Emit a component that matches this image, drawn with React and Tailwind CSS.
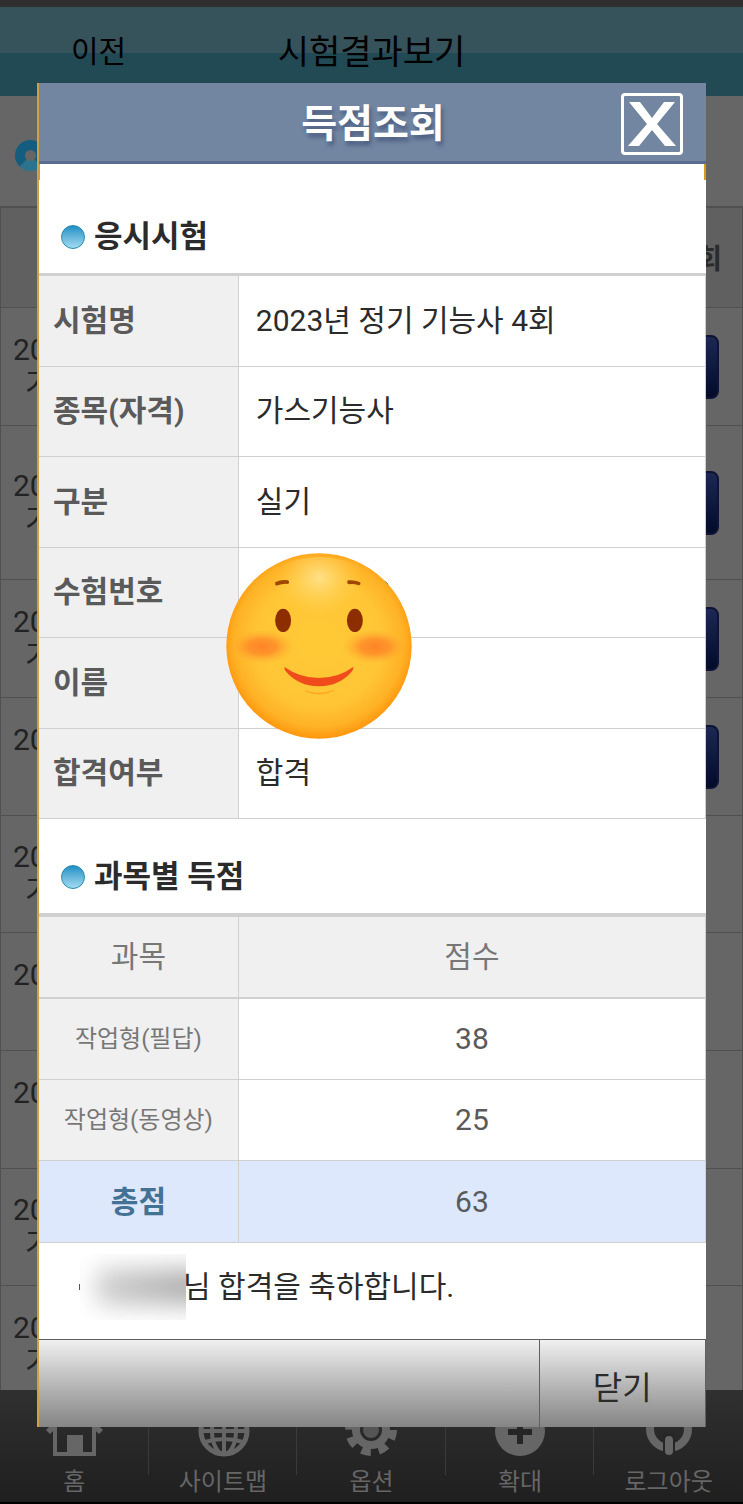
import { useState } from 'react';

const examInfo = [
  { label: '시험명', value: '2023년 정기 기능사 4회' },
  { label: '종목(자격)', value: '가스기능사' },
  { label: '구분', value: '실기' },
  { label: '수험번호', value: '00000000' },
  { label: '이름', value: '' },
  { label: '합격여부', value: '합격' },
];

const scores = [
  { subject: '작업형(필답)', score: 38 },
  { subject: '작업형(동영상)', score: 25 },
];

// Exam list behind the popup
const examRows = [
  { height: 'h-[118px]', second: '기', button: true },
  { height: 'h-[154px]', second: '기', button: true },
  { height: 'h-[118px]', second: '기', button: true },
  { height: 'h-[118px]', second: '', button: true },
  { height: 'h-[117px]', second: '기', button: false },
  { height: 'h-[118px]', second: '', button: false },
  { height: 'h-[118px]', second: '', button: false },
  { height: 'h-[117px]', second: '기', button: false },
  { height: 'h-[118px]', second: '기', button: false },
];

const HomeIcon = () => (
  <svg viewBox="0 0 60 60" className="size-[60px]" fill="currentColor" aria-hidden="true">
    <path d="M30 4 2 31l4 4 3-3v25h43V32l3 3 4-4zM13 28 30 12l18 16v25h-9V36H23v17H13z" fillRule="evenodd" />
    <path d="M23 36h16v18H23z" />
  </svg>
);

const GlobeIcon = () => (
  <svg viewBox="0 0 60 60" className="size-[60px]" fill="none" stroke="currentColor" strokeWidth="4" aria-hidden="true">
    <circle cx="31" cy="32" r="23" strokeWidth="5" />
    <ellipse cx="31" cy="32" rx="12" ry="23" />
    <path d="M31 9v46M8 32h46M12 19q19 6 38 0M12 43q19-6 38 0" />
  </svg>
);

const GearIcon = () => (
  <svg viewBox="0 0 60 60" className="size-[60px]" fill="none" stroke="currentColor" aria-hidden="true">
    <circle cx="30" cy="31" r="15" strokeWidth="8" />
    <circle cx="30" cy="31" r="22" strokeWidth="8" strokeDasharray="9.3 7.98" />
    <circle cx="30" cy="31" r="8" fill="#555555" stroke="none" />
  </svg>
);

const PlusIcon = () => (
  <svg viewBox="0 0 60 60" className="size-[60px]" aria-hidden="true">
    <circle cx="30" cy="32" r="25" fill="currentColor" />
    <path d="M18 33h24M30 21v24" stroke="#262626" strokeWidth="6" />
  </svg>
);

const LogoutIcon = () => (
  <svg viewBox="0 0 60 60" className="size-[60px]" fill="none" stroke="currentColor" aria-hidden="true">
    <circle cx="30" cy="30" r="19" strokeWidth="8" />
    <path d="M30 34v24" stroke="#262626" strokeWidth="12" />
    <path d="M30 41v11" strokeWidth="8" strokeLinecap="round" />
  </svg>
);

const navItems = [
  { label: '홈', Icon: HomeIcon },
  { label: '사이트맵', Icon: GlobeIcon },
  { label: '옵션', Icon: GearIcon },
  { label: '확대', Icon: PlusIcon },
  { label: '로그아웃', Icon: LogoutIcon },
];

const SmileFace = () => (
  <svg viewBox="0 0 560 560" className="size-full" aria-hidden="true">
    <defs>
      <radialGradient id="face" cx="0.5" cy="0.48" r="0.53">
        <stop offset="0" stopColor="#ffc935" />
        <stop offset="0.65" stopColor="#ffc535" />
        <stop offset="0.86" stopColor="#ffb226" />
        <stop offset="1" stopColor="#ff920a" />
      </radialGradient>
      <radialGradient id="shine">
        <stop offset="0" stopColor="#ffe491" stopOpacity="0.9" />
        <stop offset="1" stopColor="#ffd050" stopOpacity="0" />
      </radialGradient>
      <radialGradient id="cheek">
        <stop offset="0" stopColor="#ff8328" />
        <stop offset="0.45" stopColor="#ff8a28" stopOpacity="0.8" />
        <stop offset="1" stopColor="#ffae30" stopOpacity="0" />
      </radialGradient>
      <clipPath id="face-clip">
        <circle cx="280" cy="280" r="268" />
      </clipPath>
    </defs>
    <circle cx="280" cy="280" r="279" fill="url(#face)" />
    <g clipPath="url(#face-clip)">
      <ellipse cx="280" cy="75" rx="130" ry="120" fill="url(#shine)" />
      <ellipse cx="108" cy="282" rx="98" ry="52" fill="url(#cheek)" />
      <ellipse cx="448" cy="282" rx="98" ry="52" fill="url(#cheek)" />
    </g>
    <ellipse cx="172" cy="203" rx="24" ry="35" fill="#8c2e00" />
    <ellipse cx="388" cy="203" rx="24" ry="35" fill="#8c2e00" />
    <path d="M148 88q18-9 38-6 4 1 4 6t-5 5q-17-1-31 5-5 1-6-3z" fill="#a04800" />
    <path d="M365 87v-1q1-4 5-4 18-1 32 5 4 2 3 6t-6 4q-14-5-29-3-5 0-5-7z" fill="#a04800" />
    <path d="M176 343q46 33 104 33t103-33q2 4-3 12-38 46-100 46t-101-46q-4-7-3-12z" fill="#f04b1b" />
    <path d="M238 415q42 15 86-1-42 21-86 1z" fill="#ffa31f" stroke="#ffa31f" strokeWidth="2" />
  </svg>
);

const SectionTitle = ({ children }) => (
  <h2 className="flex items-center gap-[9px] pl-[22px] text-[31px] leading-10 font-bold text-[#2b2b2b]">
    <span className="size-6 rounded-full border border-[#2787ae] bg-linear-to-b from-[#1590c4] to-[#a0dcf2]"></span>
    {children}
  </h2>
);

const App = () => {
  const [open, setOpen] = useState(true);

  return (
    <div className="relative flex min-h-screen flex-col bg-[#666666] font-[Roboto,'Noto_Sans_CJK_KR',sans-serif] text-[30px] leading-[34px]">
      <div className="h-[7px] bg-[#2f2f2f]"></div>
      <header className="grid h-[89px] grid-cols-[1fr_auto_1fr] items-center bg-linear-to-b from-[#36525a] from-52% to-[#214a55] to-52% text-black">
        <button type="button" className="justify-self-start pl-[71px]">이전</button>
        <h1 className="text-[34px]">시험결과보기</h1>
      </header>

      <div className="flex h-[110px] items-center pt-2 pl-[15px]">
        <span className="size-[31px] rounded-full border-10 border-[#145d7e] border-b-[#2b738e]"></span>
      </div>

      <table className="w-full border-separate border-spacing-0 border-x border-t-2 border-[#505050] text-[#222222]">
        <thead>
          <tr className="h-[100px] bg-[#606060]">
            <th className="border-b border-[#505050]"></th>
            <th className="border-b border-[#505050] pt-1 pr-5 text-right text-[28px] font-bold text-[#2b2b2b]">조회</th>
          </tr>
        </thead>
        <tbody>
          {examRows.map((row, i) => (
            <tr key={i} className={row.height}>
              <td className="border-b border-[#505050] pl-3">
                <div className="h-[34px]">20</div>
                <div className="h-[34px] pl-3">{row.second}</div>
              </td>
              <td className="border-b border-[#505050] pr-[23px]">
                {row.button && (
                  <button
                    type="button"
                    aria-label="조회"
                    className="ml-auto block h-16 w-24 rounded-lg border-2 border-[#0d1436] bg-linear-to-b from-[#1c2853] to-[#040b2a]"
                  ></button>
                )}
              </td>
            </tr>
          ))}
        </tbody>
      </table>

      {/* Bottom menu */}
      <nav className="relative -mt-[14px] grid h-[114px] grid-cols-5 border-b-2 border-black bg-linear-to-b from-[#303030] to-[#1f1f1f] text-[#666666]">
        {navItems.map(({ label, Icon }) => (
          <a key={label} href="#" className="flex flex-col items-center pt-[9px] text-2xl leading-[46px]">
            <Icon />
            {label}
          </a>
        ))}
        <div className="pointer-events-none absolute inset-x-0 top-0 grid h-[85px] grid-cols-5 divide-x divide-[#3a3a3a]">
          {navItems.map(({ label }) => (
            <span key={label}></span>
          ))}
        </div>
      </nav>

      {open && (
        <div role="dialog" aria-labelledby="popup-title" className="absolute inset-x-[37px] top-[83px] border-l-2 border-[#d0a045] bg-white">
          <div className="grid h-[81px] grid-cols-[1fr_auto_1fr] items-center border-b-3 border-[#5a6c90] bg-[#7286a1] pt-1 pr-[23px]">
            <h1 id="popup-title" className="col-start-2 pl-6 text-[39px] font-bold text-white [text-shadow:2px_4px_4px_#4a5c80]">득점조회</h1>
            <button
              type="button"
              aria-label="팝업 닫기"
              onClick={() => setOpen(false)}
              className="size-[62px] justify-self-end rounded-sm border-3 border-white p-1"
            >
              <svg viewBox="0 0 48 44" className="size-full" fill="white" aria-hidden="true">
                <path d="M1 0h11l12 16L36 0h11L29 22l19 22H37L24 28 11 44H0l19-22z" />
              </svg>
            </button>
          </div>
          <div className="absolute top-[81px] right-0 h-4 w-[2px] bg-[#d99a18]"></div>
          <div className="absolute top-[81px] left-0 h-4 w-px bg-[#d99a18]"></div>

          <div className="flex h-[109px] flex-col justify-end pb-4">
            <SectionTitle>응시시험</SectionTitle>
          </div>
          <div className="relative">
            <table className="h-[546px] w-full border-separate border-spacing-0 border-t-3 border-r border-[#d0d0d0]">
              <tbody>
                {examInfo.map((item) => (
                  <tr key={item.label}>
                    <th scope="row" className="w-[30%] border-r border-b border-[#d0d0d0] bg-[#f0f0f0] pl-[14px] text-left font-bold text-[#5a5a5a]">
                      {item.label}
                    </th>
                    <td className="border-b border-[#d0d0d0] pl-[17px] text-[#2b2b2b]">{item.value}</td>
                  </tr>
                ))}
              </tbody>
            </table>
            {/* Sticker hiding the personal data */}
            <div className="absolute top-[280px] left-[187px] size-[186px]">
              <SmileFace />
            </div>
          </div>

          <div className="flex h-[94px] flex-col justify-end pb-4">
            <SectionTitle>과목별 득점</SectionTitle>
          </div>
          <table className="w-full border-separate border-spacing-0 border-t-4 border-r border-[#d0d0d0] text-center text-[#5a5a5a]">
            <thead>
              <tr className="h-[82px] bg-[#f0f0f0] text-[#777777]">
                <th scope="col" className="w-[30%] border-r border-b-2 border-[#d0d0d0] font-normal">과목</th>
                <th scope="col" className="border-b-2 border-[#d0d0d0] font-normal">점수</th>
              </tr>
            </thead>
            <tbody>
              {scores.map((item) => (
                <tr key={item.subject} className="h-[81px]">
                  <th scope="row" className="border-r border-b border-[#d0d0d0] bg-[#f0f0f0] text-2xl leading-[34px] font-normal text-[#777777]">
                    {item.subject}
                  </th>
                  <td className="border-b border-[#d0d0d0]">{item.score}</td>
                </tr>
              ))}
              <tr className="h-[82px] bg-[#dde8fc]">
                <th scope="row" className="border-r border-b border-[#d0d0d0] font-bold text-[#447295]">총점</th>
                <td className="border-b border-[#d0d0d0]">63</td>
              </tr>
            </tbody>
          </table>

          <p className="flex h-[96px] items-center pb-2 pl-10 text-[#2b2b2b]">
            <span className="h-[6px] w-px bg-[#555555]"></span>
            <span className="mr-[-3px] flex h-[66px] w-[106px] items-center overflow-hidden pl-4">
              <span className="h-9 w-28 shrink-0 rounded-lg bg-linear-to-r from-[#d0d0d0] to-[#a8a8a8] blur-md"></span>
            </span>
            님 합격을 축하합니다.
          </p>

          <div className="grid h-[88px] grid-cols-[3fr_1fr] border-t border-r border-[#606060] bg-linear-to-b from-[#f0f0f0] to-[#858585]">
            <div></div>
            <button type="button" onClick={() => setOpen(false)} className="border-l border-[#606060] pt-2 text-[32px] text-[#2b2b2b]">
              닫기
            </button>
          </div>
        </div>
      )}
    </div>
  );
};

export default App;
